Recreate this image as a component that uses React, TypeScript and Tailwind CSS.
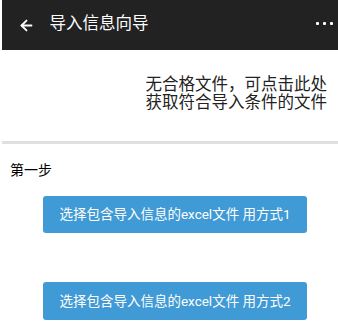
import React from "react";
import { ArrowLeft } from "lucide-react";

export default function App() {
  const font = { fontFamily: "Roboto, 'Noto Sans CJK SC', sans-serif" };
  return (
    <div className="w-[338px] h-[331px] bg-white overflow-hidden" style={font}>
      <div className="ml-[2px] h-[50px] bg-[#222222] flex items-center relative">
        <div className="ml-[15.5px] w-[17px] h-[17px] flex items-center justify-center">
          <ArrowLeft size={17} color="#ffffff" strokeWidth={2.6} />
        </div>
        <div className="ml-[15px] text-white text-[16.5px] leading-[20px] -mt-[2px]">导入信息向导</div>
        <div className="ml-auto mr-[5px] flex gap-[4px] items-center -mt-[3px]">
          <div className="w-[3px] h-[3px] bg-white rounded-[1px]" />
          <div className="w-[3px] h-[3px] bg-white rounded-[1px]" />
          <div className="w-[3px] h-[3px] bg-white rounded-[1px]" />
        </div>
      </div>
      <div className="mt-[26px] flex justify-end pr-[11px]">
        <div className="text-[16.5px] leading-[18px] text-[#222222]">
          <div>无合格文件，可点击此处</div>
          <div>获取符合导入条件的文件</div>
        </div>
      </div>
      <div className="mt-[29px] ml-[2px] h-[3px] bg-[#e0e0e0]" />
      <div className="mt-[15.5px] ml-[10px] text-[14px] leading-[20px] text-black">第一步</div>
      <div className="mt-[16.5px] flex flex-col items-start pl-[43px] gap-[49px]">
        <button className="w-[264px] h-[37px] rounded-[3px] bg-[#409ad5] text-white text-[13.5px] flex items-center justify-center">
          选择包含导入信息的excel文件 用方式1
        </button>
        <button className="w-[264px] h-[38px] rounded-[3px] bg-[#409ad5] text-white text-[13.5px] flex items-center justify-center">
          选择包含导入信息的excel文件 用方式2
        </button>
      </div>
    </div>
  );
}
